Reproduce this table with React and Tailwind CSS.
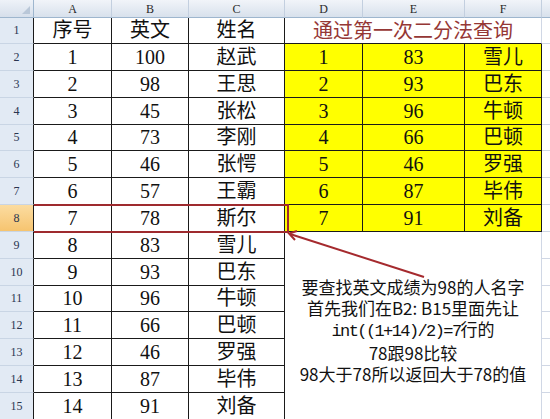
import React from "react";

const LEFT = [
  ["序号", "英文", "姓名"],
  ["1", "100", "赵武"],
  ["2", "98", "王思"],
  ["3", "45", "张松"],
  ["4", "73", "李刚"],
  ["5", "46", "张愕"],
  ["6", "57", "王霸"],
  ["7", "78", "斯尔"],
  ["8", "83", "雪儿"],
  ["9", "93", "巴东"],
  ["10", "96", "牛顿"],
  ["11", "66", "巴顿"],
  ["12", "46", "罗强"],
  ["13", "87", "毕伟"],
  ["14", "91", "刘备"],
];

const RIGHT = [
  ["1", "83", "雪儿"],
  ["2", "93", "巴东"],
  ["3", "96", "牛顿"],
  ["4", "66", "巴顿"],
  ["5", "46", "罗强"],
  ["6", "87", "毕伟"],
  ["7", "91", "刘备"],
];

function ColHeader({ label, last }) {
  return (
    <div
      className={`flex items-center justify-center bg-gradient-to-b from-[#f1f4f9] to-[#d8e1ec] border-b border-[#9eb6ce] ${last ? "" : "border-r border-r-[#c3cfdf]"} text-[12px] text-[#2a2a2a] font-['Liberation_Serif',serif]`}
    >
      {label}
    </div>
  );
}

function RowHeader({ n }) {
  const sel = n === 8;
  return (
    <div
      className={`flex items-end justify-center pb-[4px] border-b border-r border-b-[#c9d5e4] border-r-[#1a1a1a] text-[12px] text-[#2a3550] font-['Liberation_Serif',serif] ${sel ? "bg-gradient-to-b from-[#fbdca0] to-[#f6c46f]" : "bg-[#e2eaf4]"}`}
    >
      {n}
    </div>
  );
}

export default function App() {
  const cells = [];
  cells.push(
    <div
      key="corner"
      className="relative bg-gradient-to-b from-[#eef2f8] to-[#d6dfeb] border-b border-r border-[#9eb6ce]"
    >
      <div className="absolute right-[3px] bottom-[3px] w-0 h-0 border-l-[8px] border-l-transparent border-b-[8px] border-b-[#b9c7d8]" />
    </div>
  );
  ["A", "B", "C", "D", "E", "F"].forEach((l) => cells.push(<ColHeader key={"h" + l} label={l} />));
  cells.push(<ColHeader key="hG" label="" last />);

  for (let r = 1; r <= 15; r++) {
    cells.push(<RowHeader key={"r" + r} n={r} />);
    LEFT[r - 1].forEach((v, i) =>
      cells.push(
        <div
          key={`L${r}-${i}`}
          className="flex items-end justify-center pb-[1px] bg-white border-r border-b border-[#1a1a1a] text-[20px] leading-[24px] text-[#111] font-['Liberation_Serif','Noto_Sans_CJK_SC',serif]"
        >
          {v}
        </div>
      )
    );
    if (r === 1) {
      cells.push(
        <div
          key="title"
          className="col-span-3 flex items-end justify-center pb-[1px] bg-white border-b border-r border-b-[#1a1a1a] border-r-[#d0d7e5] text-[20px] leading-[24px] text-[#953735] font-['Noto_Sans_CJK_SC',sans-serif]"
        >
          通过第一次二分法查询
        </div>
      );
    } else if (r <= 8) {
      RIGHT[r - 2].forEach((v, i) =>
        cells.push(
          <div
            key={`R${r}-${i}`}
            className="flex items-end justify-center pb-[1px] bg-[#ffff00] border-r border-b border-[#1a1a1a] text-[20px] leading-[24px] text-[#111] font-['Liberation_Serif','Noto_Sans_CJK_SC',serif]"
          >
            {v}
          </div>
        )
      );
    } else if (r === 9) {
      cells.push(
        <div
          key="note"
          className="col-span-3 row-span-7 bg-white border-r border-[#d0d7e5] pt-[44px] flex flex-col items-center text-[17px] leading-[21px] text-[#111] font-['Noto_Sans_CJK_SC',sans-serif]"
        >
          <div>要查找英文成绩为98的人名字</div>
          <div>首先我们在B2: B15里面先让</div>
          <div>
            <span className="font-['Liberation_Mono',monospace] tracking-[-1.6px]">int((1+14)/2)=7</span>
            行的
          </div>
          <div>78跟98比较</div>
          <div>98大于78所以返回大于78的值</div>
        </div>
      );
    }
    cells.push(<div key={"G" + r} className="col-start-8 bg-white border-b border-[#d0d7e5]" />);
  }

  return (
    <div className="relative w-[550px] h-[419px] overflow-hidden bg-white">
      <div className="grid grid-cols-[34px_78px_77px_96px_78px_102px_77px_1fr] grid-rows-[18px_26px_repeat(14,26.85px)] w-[550px]">
        {cells}
      </div>
      <div className="absolute left-[34px] top-[204px] w-[255px] h-[29px] border-t-2 border-b-2 border-r-2 border-[#9e2a2e]" />
      <svg className="absolute inset-0 pointer-events-none" width="550" height="419">
        <line x1="424" y1="277" x2="290" y2="234" stroke="#a52a2e" strokeWidth="2" />
        <polyline points="297,231 289,233.5 295,240" fill="none" stroke="#a52a2e" strokeWidth="2" />
      </svg>
    </div>
  );
}
